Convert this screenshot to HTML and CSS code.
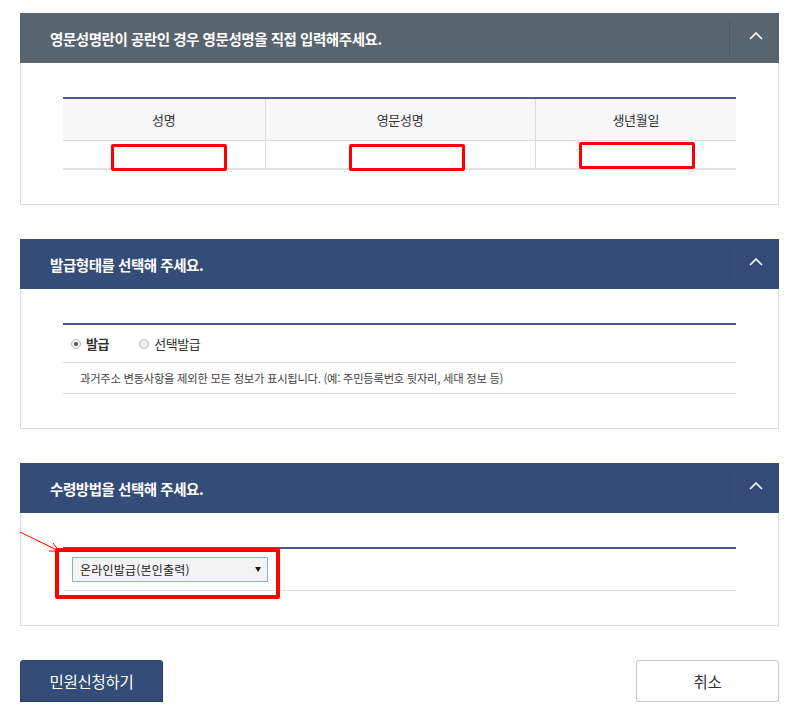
FILE: index.html
```html
<!DOCTYPE html>
<html lang="ko">
<head>
<meta charset="utf-8">
<title>민원신청</title>
<link rel="stylesheet" href="styles.css">
</head>
<body>
<div class="page">
  <section class="panel">
    <header class="panel-head grey">
      <h2 class="panel-title">영문성명란이 공란인 경우 영문성명을 직접 입력해주세요.</h2>
      <button class="toggle" type="button" aria-label="접기">
        <svg width="14" height="8" viewBox="0 0 14 8"><polyline points="1,7 7,1 13,7" fill="none" stroke="#fff" stroke-width="1.6"/></svg>
      </button>
    </header>
    <div class="panel-body">
      <table class="grid">
        <thead>
          <tr><th class="c1">성명</th><th class="c2">영문성명</th><th class="c3">생년월일</th></tr>
        </thead>
        <tbody>
          <tr>
            <td><span class="mark m1"></span></td>
            <td><span class="mark m2"></span></td>
            <td><span class="mark m3"></span></td>
          </tr>
        </tbody>
      </table>
    </div>
  </section>

  <section class="panel">
    <header class="panel-head navy">
      <h2 class="panel-title">발급형태를 선택해 주세요.</h2>
      <button class="toggle" type="button" aria-label="접기">
        <svg width="14" height="8" viewBox="0 0 14 8"><polyline points="1,7 7,1 13,7" fill="none" stroke="#fff" stroke-width="1.6"/></svg>
      </button>
    </header>
    <div class="panel-body">
      <div class="box">
        <div class="radio-row">
          <label class="radio on"><span class="dot"></span><span class="rl strong">발급</span></label>
          <label class="radio"><span class="dot"></span><span class="rl">선택발급</span></label>
        </div>
        <p class="desc">과거주소 변동사항을 제외한 모든 정보가 표시됩니다. (예: 주민등록번호 뒷자리, 세대 정보 등)</p>
      </div>
    </div>
  </section>

  <section class="panel">
    <header class="panel-head navy">
      <h2 class="panel-title">수령방법을 선택해 주세요.</h2>
      <button class="toggle" type="button" aria-label="접기">
        <svg width="14" height="8" viewBox="0 0 14 8"><polyline points="1,7 7,1 13,7" fill="none" stroke="#fff" stroke-width="1.6"/></svg>
      </button>
    </header>
    <div class="panel-body">
      <div class="box">
        <div class="select-row">
          <div class="select">
            <span class="sel-text">온라인발급(본인출력)</span>
            <span class="sel-arrow">▼</span>
          </div>
          <span class="mark big"></span>
          <svg class="arrow" width="44" height="24" viewBox="0 0 44 24">
            <line x1="1" y1="1" x2="40" y2="20" stroke="#f00" stroke-width="1"/>
            <polyline points="30,20 40,20 34,12" fill="none" stroke="#f00" stroke-width="1"/>
          </svg>
        </div>
      </div>
    </div>
  </section>

  <div class="actions">
    <button class="btn primary" type="button">민원신청하기</button>
    <button class="btn ghost" type="button">취소</button>
  </div>
</div>
</body>
</html>
```

FILE: styles.css
```css
* { box-sizing: border-box; }
html, body { margin: 0; padding: 0; background: #fff; }
body {
  font-family: "Noto Sans CJK KR", "Noto Sans", "Liberation Sans", sans-serif;
  color: #333;
}
.page {
  width: 759px;
  margin-left: 20px;
  padding-top: 13px;
  display: flex;
  flex-direction: column;
  gap: 34px;
}
.panel {
  border: 1px solid #dcdcdc;
  border-top: none;
  background: #fff;
}
.panel-head {
  height: 50px;
  display: flex;
  align-items: center;
  justify-content: space-between;
  margin: 0 -1px;
}
.panel-head.grey { background: #58646e; }
.panel-head.navy { background: #344c78; }
.panel-title {
  margin: 0;
  padding-left: 30px;
  font-size: 14.5px;
  font-weight: 700;
  letter-spacing: -0.45px;
  color: #fff;
}
.toggle {
  width: 50px;
  height: 36px;
  border: none;
  background: transparent;
  border-left: 1px solid rgba(40, 55, 80, 0.45);
  display: flex;
  align-items: center;
  justify-content: center;
  padding: 0 0 4px 2px;
}
.grey .toggle { border-left-color: #4c5862; }
.navy .toggle { border-left-color: #2f4670; }

.panel-body {
  padding: 34px 42px 34px;
}
.grid {
  width: 100%;
  border-collapse: collapse;
  border-top: 2px solid #4a5d86;
  border-bottom: 2px solid #e3e3e3;
  table-layout: fixed;
}
.grid th {
  height: 42px;
  background: #f7f7f7;
  font-size: 13px;
  font-weight: 400;
  letter-spacing: -0.3px;
  color: #333;
  border-bottom: 1px solid #dcdcdc;
  border-left: 1px solid #dcdcdc;
  padding: 0;
}
.grid th:first-child, .grid td:first-child { border-left: none; }
.grid .c1 { width: 202px; }
.grid .c2 { width: 270px; }
.grid td {
  height: 29px;
  border-left: 1px solid #dcdcdc;
  padding: 0;
  position: relative;
}
.mark {
  position: absolute;
  border: 3px solid #f00;
  border-radius: 2px;
  width: 116px;
  height: 27px;
}
.m1 { left: 48px; top: 3px; }
.m2 { left: 83px; top: 3px; }
.m3 { left: 43px; top: 1px; }

.box {
  border-top: 2px solid #4a5d86;
}
.radio-row {
  height: 38px;
  display: flex;
  align-items: center;
  gap: 30px;
  padding-left: 8px;
  border-bottom: 1px solid #dcdcdc;
}
.radio {
  display: flex;
  align-items: center;
  gap: 5px;
}
.dot {
  width: 10px;
  height: 10px;
  border-radius: 50%;
  border: 1px solid #bbb;
  background: #eee;
  position: relative;
}
.radio.on .dot::after {
  content: "";
  position: absolute;
  left: 2px;
  top: 2px;
  width: 4px;
  height: 4px;
  border-radius: 50%;
  background: #555;
}
.rl {
  font-size: 13px;
  letter-spacing: -0.4px;
  color: #333;
}
.rl.strong { font-weight: 700; }
.desc {
  margin: 0;
  height: 31px;
  line-height: 30px;
  padding-left: 17px;
  font-size: 11.3px;
  letter-spacing: -0.25px;
  color: #444;
  border-bottom: 1px solid #dcdcdc;
}

.select-row {
  position: relative;
  height: 42px;
  padding: 8px 0 0 9px;
  border-bottom: 1px solid #dcdcdc;
}
.select {
  width: 196px;
  height: 25px;
  border: 1px solid #8cb0de;
  background: #f3f3f3;
  display: flex;
  align-items: center;
  justify-content: space-between;
  padding: 0 6px 0 7px;
}
.sel-text {
  font-size: 12px;
  letter-spacing: 0.2px;
  color: #222;
}
.sel-arrow {
  font-size: 6px;
  color: #111;
  margin-bottom: 3px;
}
.mark.big {
  left: -8px;
  top: -1px;
  width: 225px;
  height: 51px;
  border-width: 4px;
}
.arrow {
  position: absolute;
  left: -44px;
  top: -18px;
}

.actions {
  display: flex;
  justify-content: space-between;
}
.btn {
  width: 143px;
  height: 42px;
  font-family: inherit;
  font-size: 15.5px;
  letter-spacing: -0.3px;
  border-radius: 3px;
  cursor: pointer;
}
.btn.primary {
  background: #344c78;
  color: #fff;
  border: 1px solid #2c4168;
  box-shadow: 0 2px 0 #25385a;
}
.btn.ghost {
  background: #fff;
  color: #333;
  border: 1px solid #c8c8c8;
  box-shadow: 0 2px 0 #d8d8d8;
}
```
